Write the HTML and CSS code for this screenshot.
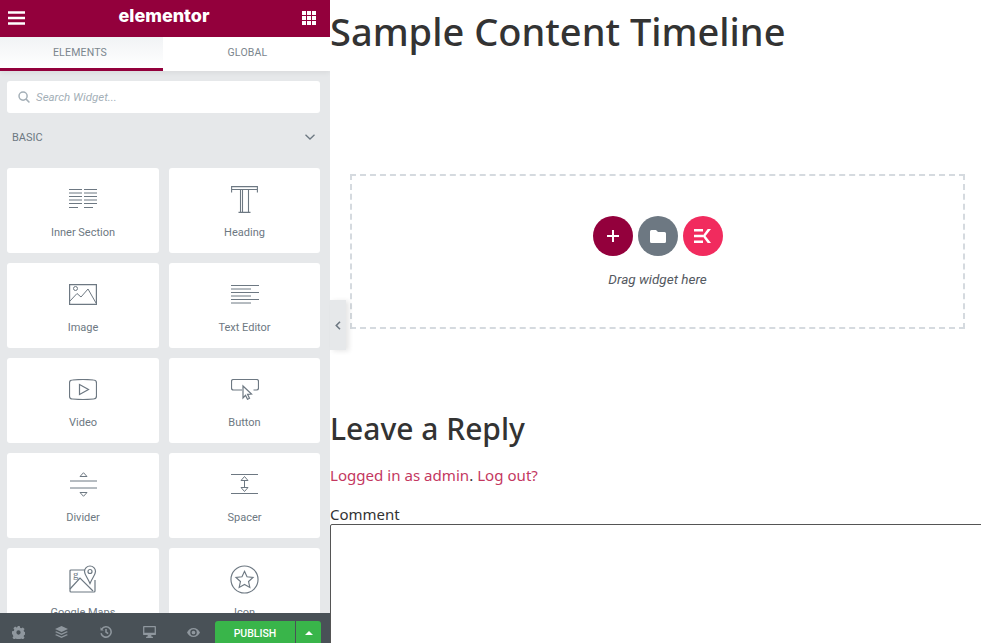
FILE: index.html
```html
<!DOCTYPE html>
<html lang="en">
<head>
    <meta charset="UTF-8">
    <title>Elementor | Sample Content Timeline</title>
    <link rel="stylesheet" href="styles.css">
</head>
<body>
    <aside class="panel">
        <header class="panel-top">
            <svg width="18" height="14" viewBox="0 0 18 14"><path d="M0 1.500h17M0 7h17M0 12.500h17" stroke="#fff" stroke-width="2.400"/></svg>
            <span class="logo">elementor</span>
            <svg width="14" height="14" viewBox="0 0 14 14" fill="#fff"><path d="M0 0h4v4H0zM5 0h4v4H5zM10 0h4v4h-4zM0 5h4v4H0zM5 5h4v4H5zM10 5h4v4h-4zM0 10h4v4H0zM5 10h4v4H5zM10 10h4v4h-4z"/></svg>
        </header>
        <nav class="tabs">
            <div class="tab tab-active">ELEMENTS</div>
            <div class="tab">GLOBAL</div>
        </nav>
        <div class="search">
            <svg width="12" height="12" viewBox="0 0 13 13" fill="none" stroke="#a4afb7" stroke-width="1.600"><circle cx="5.500" cy="5.500" r="4.400"/><path d="M8.800 8.800l3.600 3.600"/></svg>
            <span>Search Widget...</span>
        </div>
        <div class="group-title">
            <span>BASIC</span>
            <svg width="10" height="6" viewBox="0 0 10 6" fill="none" stroke="#6d7882" stroke-width="1.300"><path d="M.5.800L5 5l4.500-4.200"/></svg>
        </div>
        <div class="widgets">
            <div class="widget">
                <svg width="28" height="20" viewBox="0 0 28 20" fill="none" stroke="#6d7882"><path d="M0 .5h13M15 .5h13M0 4h13M15 4h13M0 7.500h13M15 7.500h13M0 11h13M15 11h13M0 14.500h13M15 14.500h13M0 18.500h9M15 18.500h9"/></svg>
                <span>Inner Section</span>
            </div>
            <div class="widget">
                <svg width="27" height="27" viewBox="0 0 27 27" fill="none" stroke="#6d7882" stroke-width="1.100"><path d="M.6 6.500V.6h25.800v5.900M.6 3.500h25.800M9.500 3.500v22.500M17.500 3.500v22.500M7.500 26.400h12M11.500 3.500v22.500"/></svg>
                <span>Heading</span>
            </div>
            <div class="widget">
                <svg width="28" height="21" viewBox="0 0 28 21" fill="none" stroke="#6d7882"><path d="M.6.600h26.800v19.800H.6z" stroke-width="1.200"/><circle cx="6.500" cy="4.500" r="2"/><path d="M1 17l7-7.500 4 3.500 7-8 8 14"/></svg>
                <span>Image</span>
            </div>
            <div class="widget">
                <svg width="28" height="19" viewBox="0 0 28 19" fill="none" stroke="#6d7882"><path d="M0 .5h28M0 4h20M0 7.500h28M0 11h20M0 14.500h28M0 18h20"/></svg>
                <span>Text Editor</span>
            </div>
            <div class="widget">
                <svg width="28" height="21" viewBox="0 0 28 21" fill="none" stroke="#6d7882" stroke-width="1.200"><path d="M3.500 1Q14 0 24.500 1q3 0 3 3v13q0 3-3 3Q14 21 3.500 20q-3 0-3-3V4q0-3 3-3z"/><path d="M10.500 5.500l9 5-9 5z"/></svg>
                <span>Video</span>
            </div>
            <div class="widget">
                <svg width="28" height="21" viewBox="0 0 28 21" fill="none" stroke="#6d7882" stroke-width="1.200"><path d="M11 11H2.500q-2 0-2-2V2.500q0-2 2-2h23q2 0 2 2V9q0 2-2 2h-3"/><path d="M12 7l8.500 8-4 .3 2 4-2 1-2-4-2.500 2.700z" fill="#fff"/></svg>
                <span>Button</span>
            </div>
            <div class="widget">
                <svg width="27" height="25" viewBox="0 0 27 25" fill="none" stroke="#6d7882"><path d="M0 9h27M0 16h27M13.500.7l3.500 3.800h-7zM13.500 24.300l3.500-3.800h-7z"/></svg>
                <span>Divider</span>
            </div>
            <div class="widget">
                <svg width="27" height="20" viewBox="0 0 27 20" fill="none" stroke="#6d7882"><path d="M0 .5h27M0 19.500h27M13.500 2.500l3.500 4h-7zM13.500 17.500l3.500-4h-7zM13.500 6.500v7"/></svg>
                <span>Spacer</span>
            </div>
            <div class="widget">
                <svg width="28" height="28" viewBox="0 0 28 28" fill="none" stroke="#6d7882" stroke-width="1.200"><path d="M17 5H2q-1 0-1 1v20q0 1 1 1h23q1 0 1-1V15"/><path d="M1 24l10-11 13 13"/><path d="M21 1a5.500 5.500 0 0 1 5.500 5.500c0 3-3 6-5.500 12-2.500-6-5.500-9-5.500-12A5.500 5.500 0 0 1 21 1z" fill="#fff"/><circle cx="21" cy="6.500" r="2"/><text x="4" y="13" class="maps-g">g</text></svg>
                <span>Google Maps</span>
            </div>
            <div class="widget">
                <svg width="29" height="29" viewBox="0 0 30 30" fill="none" stroke="#6d7882" stroke-width="1.200"><circle cx="15" cy="15" r="14"/><path d="M15 6.500l2.600 5.700 6.200.7-4.600 4.200 1.300 6.100-5.500-3.100-5.500 3.100 1.300-6.100-4.600-4.200 6.200-.7z"/></svg>
                <span>Icon</span>
            </div>
        </div>
        <footer class="panel-bottom">
            <svg class="tool" width="13" height="13" viewBox="0 0 14 14"><path fill-rule="evenodd" d="M5.700 0h2.600l.4 1.900 1.300.6 1.700-1 1.800 1.800-1 1.700.6 1.300 1.900.4v2.600l-1.900.4-.6 1.300 1 1.700-1.800 1.800-1.700-1-1.300.6-.4 1.900H5.700l-.4-1.900-1.300-.6-1.700 1-1.800-1.800 1-1.700-.6-1.300L0 8.300V5.700l1.900-.4.600-1.300-1-1.700 1.800-1.800 1.700 1 1.300-.6zM7 4.700a2.300 2.300 0 1 0 0 4.600 2.300 2.300 0 0 0 0-4.600z"/></svg>
            <svg class="tool" width="13" height="13" viewBox="0 0 14 14"><path d="M7 0l7 3.200-7 3.200L0 3.200zM1.500 5.600L7 8.100l5.500-2.500L14 6.400 7 9.600 0 6.400zM1.500 8.900L7 11.400l5.500-2.500 1.500.8L7 13 0 9.700z"/></svg>
            <svg class="tool tool-history" width="12" height="12" viewBox="0 0 14 14"><path fill="none" stroke="#8f979e" stroke-width="1.800" d="M2.100 3.500A6 6 0 1 1 1.200 8.500M7 3.500V7l2.500 1.800"/><path d="M.6 1.500v3.800h3.800z"/></svg>
            <svg class="tool tool-device" width="13" height="12" viewBox="0 0 15 14"><path fill-rule="evenodd" d="M1 0h13q1 0 1 1v8.500q0 1-1 1H9.500l.5 2h1.500V14h-8v-1.500H5l.5-2H1q-1 0-1-1V1q0-1 1-1zm.5 1.500V8h12V1.500z"/></svg>
            <svg class="tool tool-eye" width="13" height="9" viewBox="0 0 16 11"><path fill-rule="evenodd" d="M8 0c3.500 0 6.500 2.200 8 5.500C14.500 8.800 11.500 11 8 11S1.500 8.800 0 5.500C1.500 2.200 4.500 0 8 0zm0 1.500a4 4 0 1 0 0 8 4 4 0 0 0 0-8zM8 3.200a2.300 2.300 0 1 1 0 4.600 2.300 2.300 0 0 1 0-4.600z"/></svg>
            <div class="publish">
                <span class="publish-main">PUBLISH</span>
                <span class="publish-arrow"></span>
            </div>
        </footer>
    </aside>

    <div class="panel-toggle">
        <svg width="6" height="9" viewBox="0 0 6 9" fill="none" stroke="#6d7882" stroke-width="1.600"><path d="M5 .8L1.300 4.500 5 8.200"/></svg>
    </div>

    <main class="content">
        <h1>Sample Content Timeline</h1>
        <section class="dropzone">
            <div class="drop-buttons">
                <span class="round round-add">
                    <svg width="12" height="12" viewBox="0 0 12 12" stroke="#fff" stroke-width="2"><path d="M6 0v12M0 6h12"/></svg>
                </span>
                <span class="round round-folder">
                    <svg width="16" height="13" viewBox="0 0 16 13" fill="#fff"><path d="M1.500 0H6l2 2h6.500Q16 2 16 3.500v8q0 1.500-1.500 1.500h-13Q0 13 0 11.500v-10Q0 0 1.500 0z"/></svg>
                </span>
                <span class="round round-kit">
                    <svg width="17" height="14" viewBox="0 0 17 14" fill="#fff"><path d="M0 0h9v2.600H0zM0 5.700h9v2.600H0zM0 11.400h9V14H0zM17 0l-5.500 7 5.500 7h-3.300L8.500 7l5.200-7z"/></svg>
                </span>
            </div>
            <p class="drop-text">Drag widget here</p>
        </section>
        <section class="reply">
            <h2>Leave a Reply</h2>
            <p class="logged"><a href="#">Logged in as admin</a>. <a href="#">Log out?</a></p>
            <label class="comment-label" for="comment">Comment</label>
            <textarea class="comment-box" id="comment"></textarea>
        </section>
    </main>
</body>
</html>
```

FILE: styles.css
```css
* {
    box-sizing: border-box;
}
html, body {
    height: 100%;
}
body {
    margin: 0;
    display: flex;
    overflow: hidden;
    background: #fff;
    font-family: "Noto Sans", sans-serif;
    color: #333;
}

/* Left panel */
.panel {
    width: 330px;
    height: 643px;
    flex-shrink: 0;
    display: flex;
    flex-direction: column;
    position: relative;
    overflow: hidden;
    background: #e6e8ea;
    font-family: Roboto, sans-serif;
}
.panel-top {
    height: 37px;
    flex-shrink: 0;
    display: flex;
    align-items: center;
    justify-content: space-between;
    padding: 0 14px 2px 8px;
    background: #93003c;
}
.logo {
    color: #fff;
    font-family: Inter, sans-serif;
    font-size: 18px;
    font-weight: 800;
    margin-bottom: 4px;
}
.tabs {
    height: 34px;
    flex-shrink: 0;
    display: flex;
    box-shadow: 0 2px 5px rgba(0, 0, 0, 0.06);
    background: #fff;
}
.tab {
    width: 167px;
    padding: 9px 0 0 2px;
    text-align: center;
    font-size: 10.500px;
    letter-spacing: 0.2px;
    color: #7b868e;
}
.tab-active {
    width: 163px;
    padding: 9px 3px 0 0;
    border-bottom: 3px solid #93003c;
    background: linear-gradient(#f1f3f5, #fff);
}
.search {
    display: flex;
    align-items: center;
    gap: 6px;
    height: 32px;
    margin: 10px 10px 0 7px;
    padding-left: 11px;
    border-radius: 3px;
    background: #fff;
    font-size: 11.500px;
    font-style: italic;
    color: #a4afb7;
}
.group-title {
    display: flex;
    align-items: center;
    justify-content: space-between;
    height: 48px;
    margin-bottom: 7px;
    padding: 0 15px 0 12px;
    font-size: 11px;
    color: #6d7882;
}
.widgets {
    display: grid;
    grid-template-columns: 152px 151px;
    grid-auto-rows: 85px;
    gap: 10px;
    padding-left: 7px;
}
.widget {
    display: grid;
    grid-template-rows: 50px 18px;
    justify-items: center;
    align-items: center;
    padding-top: 6px;
    border-radius: 3px;
    background: #fff;
    color: #6d7882;
    font-size: 11px;
    line-height: 16px;
}
.maps-g {
    font-family: "Liberation Serif", serif;
    font-size: 11px;
    fill: #6d7882;
    stroke: none;
}
.panel-bottom {
    position: absolute;
    left: 0;
    right: 0;
    bottom: 0;
    height: 30px;
    display: flex;
    align-items: center;
    gap: 30px;
    padding: 8px 0 0 12px;
    background: #495157;
}
.tool {
    fill: #8f979e;
    flex-shrink: 0;
}
.tool-history { margin-left: 2px; }
.tool-device { margin-left: 1px; }
.tool-eye { margin-left: 1px; }
.publish {
    display: flex;
    height: 23px;
    margin-left: -15px;
    border-radius: 3px 3px 0 0;
    overflow: hidden;
    background: #39b54a;
}
.publish-main {
    width: 81px;
    padding-top: 6px;
    text-align: center;
    color: #fff;
    font-size: 10.500px;
    font-weight: 500;
    border-right: 1px solid #495157;
}
.publish-arrow {
    width: 25px;
    position: relative;
}
.publish-arrow::after {
    content: "";
    position: absolute;
    left: 9px;
    top: 10px;
    border: 4px solid transparent;
    border-top: 0;
    border-bottom: 4px solid #fff;
}
.panel-toggle {
    position: absolute;
    left: 330px;
    top: 300px;
    width: 16px;
    height: 50px;
    display: flex;
    align-items: center;
    justify-content: center;
    background: #e6e8ea;
    box-shadow: 3px 1px 5px rgba(0, 0, 0, 0.1);
}

/* Page content */
.content {
    flex: 1;
    min-width: 0;
}
h1 {
    margin: 4px 0 0;
    height: 170px;
    font-size: 38px;
    line-height: 54px;
    font-weight: 500;
    color: #333;
    white-space: nowrap;
}
.dropzone {
    height: 155px;
    margin: 0 16px 0 20px;
    border: 2px dashed #d5dadf;
    display: flex;
    flex-direction: column;
    align-items: center;
    padding-top: 40px;
}
.drop-buttons {
    display: flex;
    gap: 5px;
}
.round {
    width: 40px;
    height: 40px;
    border-radius: 50%;
    display: flex;
    align-items: center;
    justify-content: center;
}
.round-add { background: #93003c; }
.round-folder { background: #6d7882; }
.round-kit { background: #f12b5e; }
.drop-text {
    margin: 15px 0 0;
    font-family: Roboto, sans-serif;
    font-size: 13.500px;
    font-style: italic;
    color: #54595f;
}
.reply {
    padding-top: 80px;
}
h2 {
    margin: 0;
    font-size: 30px;
    line-height: 40px;
    font-weight: 500;
    color: #333;
}
.logged {
    margin: 15px 0 0;
    font-size: 15.100px;
    line-height: 22px;
}
.logged a {
    color: #c4385f;
    text-decoration: none;
}
.comment-label {
    display: block;
    margin-top: 19px;
    font-size: 15px;
    line-height: 19px;
    color: #333;
}
.comment-box {
    display: block;
    width: 700px;
    height: 180px;
    margin: 0;
    border: 1px solid #555;
    border-radius: 2px;
    background: #fff;
}
```
